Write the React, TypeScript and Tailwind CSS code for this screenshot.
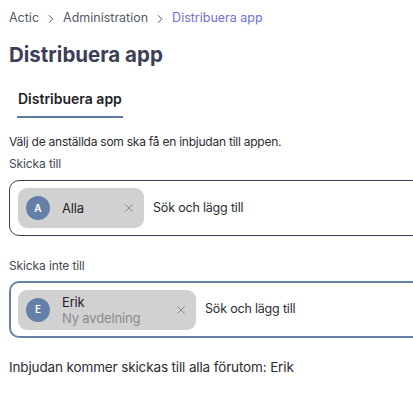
import { X, ChevronRight } from "lucide-react";

interface ChipProps {
  initial: string;
  name: string;
  sub?: string;
  width: string;
}

function Chip({ initial, name, sub, width }: ChipProps) {
  return (
    <div className={`flex h-[40px] items-center rounded-[9px] bg-[#d1d1d1] pl-[8px] pr-[8px] ${width}`}>
      <div className="flex h-[24px] w-[24px] shrink-0 items-center justify-center rounded-full bg-[#6580a8] text-[10px] font-semibold text-white">
        {initial}
      </div>
      <div className="ml-[12px] flex flex-1 flex-col leading-[16px] tracking-[-0.01em]">
        <span className="text-[13px] text-[#23232b]">{name}</span>
        {sub && <span className="text-[13px] text-[#8a8a8f]">{sub}</span>}
      </div>
      <X className="h-[14px] w-[14px] text-[#7a7a7a]" strokeWidth={1.4} />
    </div>
  );
}

export default function App() {
  return (
    <div className="min-h-[400px] bg-white pl-[9px] font-['Inter',sans-serif] text-[#2c2c33]">
      <nav className="flex h-[36px] items-center pt-[1px] text-[12.5px] text-[#555a66]">
        <span>Actic</span>
        <ChevronRight className="mx-[5px] h-[14px] w-[14px] text-[#4a4d57]" strokeWidth={1.6} />
        <span>Administration</span>
        <ChevronRight className="mx-[5px] h-[14px] w-[14px] text-[#4a4d57]" strokeWidth={1.6} />
        <span className="text-[#6f70d9]">Distribuera app</span>
      </nav>
      <h1 className="mt-[5px] text-[20.5px] font-bold leading-[28px] text-[#3c3f56]">Distribuera app</h1>

      <div className="mt-[17px] ml-[8px] inline-block border-b-[2px] border-[#5f7aa1] px-[1px] pb-[6px]">
        <span className="text-[14px] font-semibold text-[#222228]">Distribuera app</span>
      </div>

      <p className="mt-[16px] text-[12px] leading-[16px] tracking-[-0.02em] text-[#2c2c33]">
        Välj de anställda som ska få en inbjudan till appen.
      </p>
      <div className="mt-[6px] text-[12px] leading-[16px] tracking-[-0.01em] text-[#444852]">Skicka till</div>
      <div className="mt-[8px] -mr-[20px] flex h-[56px] items-center gap-[9px] rounded-[10px] border border-[#3c3f4f] pl-[8px]">
        <Chip initial="A" name="Alla" width="w-[126px]" />
        <span className="text-[12.5px] tracking-[-0.015em] text-[#2c2c33]">Sök och lägg till</span>
      </div>

      <div className="mt-[22px] text-[12px] leading-[16px] tracking-[-0.01em] text-[#444852]">Skicka inte till</div>
      <div className="mt-[7px] -mr-[20px] flex h-[57px] items-center gap-[9px] rounded-[10px] border-[2px] border-[#6880a8] pl-[7px]">
        <Chip initial="E" name="Erik" sub="Ny avdelning" width="w-[178px]" />
        <span className="text-[12.5px] tracking-[-0.015em] text-[#2c2c33]">Sök och lägg till</span>
      </div>

      <p className="mt-[19px] text-[13.5px] leading-[20px] tracking-[-0.01em] text-[#2c2c33]">
        Inbjudan kommer skickas till alla förutom: Erik
      </p>
    </div>
  );
}
